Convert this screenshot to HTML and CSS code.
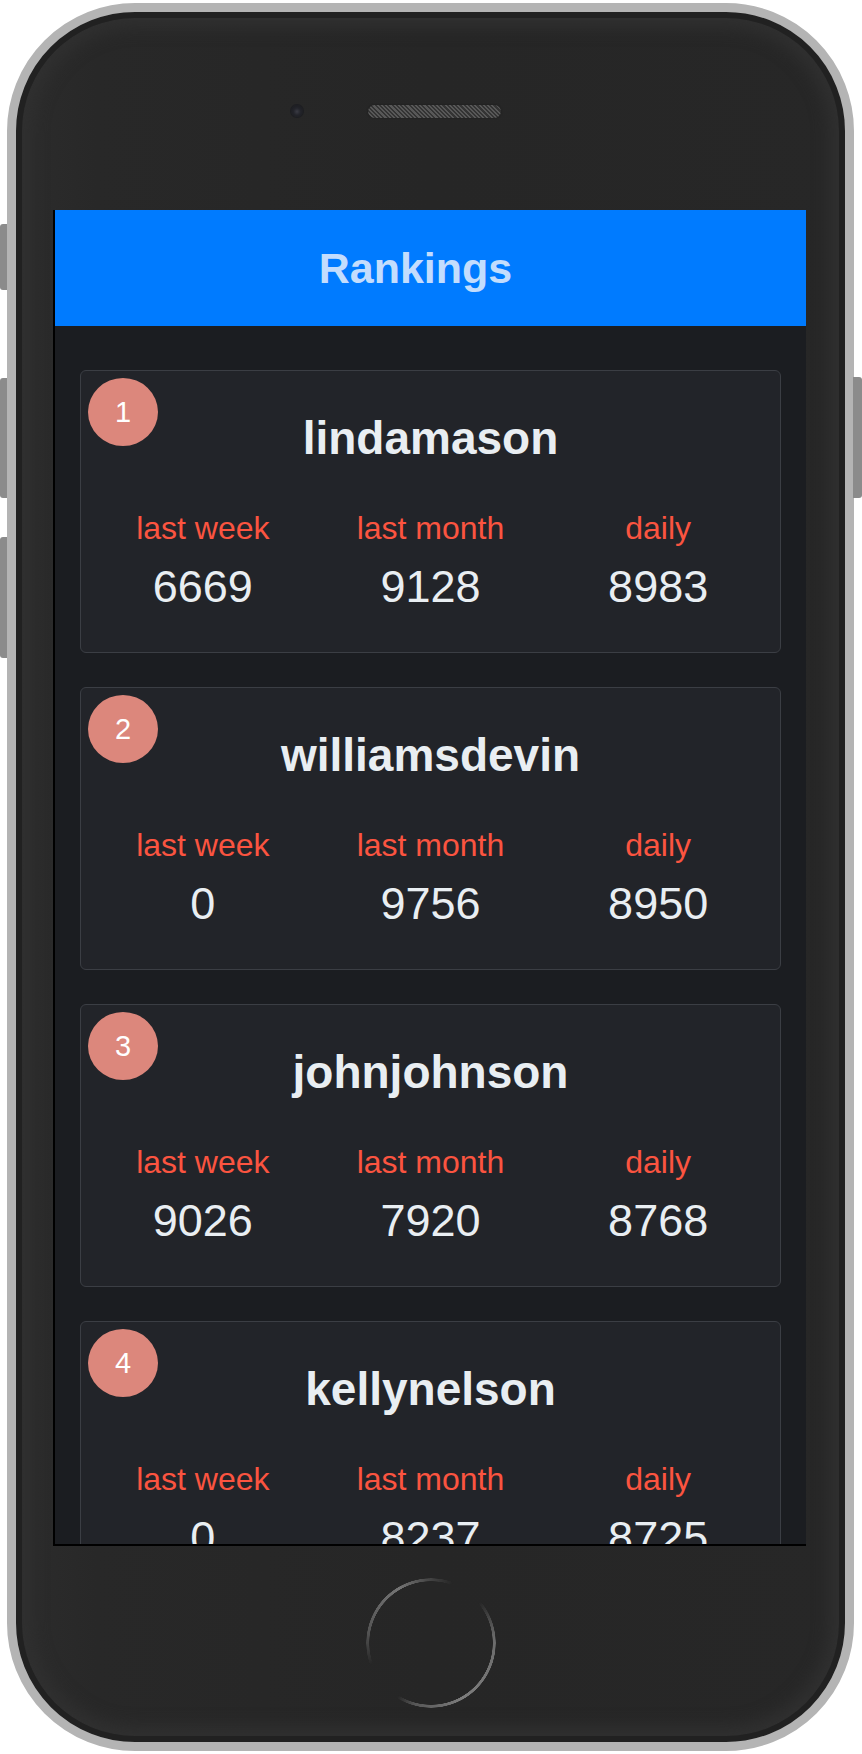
FILE: index.html
```html
<!DOCTYPE html>
<html lang="en">
<head>
<meta charset="utf-8">
<title>Rankings</title>
<link rel="stylesheet" href="styles.css">
</head>
<body>
<div class="phone">
  <span class="btn btn-mute"></span>
  <span class="btn btn-vol-up"></span>
  <span class="btn btn-vol-down"></span>
  <span class="btn btn-power"></span>
  <div class="phone-top">
    <span class="camera"></span>
    <span class="speaker"></span>
  </div>
  <div class="screen">
    <header class="app-header"><h1 class="app-title">Rankings</h1></header>
    <main class="rank-list">
      <section class="card">
        <span class="badge">1</span>
        <h2 class="name">lindamason</h2>
        <div class="stats">
          <div class="stat"><div class="label">last week</div><div class="value">6669</div></div>
          <div class="stat"><div class="label">last month</div><div class="value">9128</div></div>
          <div class="stat"><div class="label">daily</div><div class="value">8983</div></div>
        </div>
      </section>
      <section class="card">
        <span class="badge">2</span>
        <h2 class="name">williamsdevin</h2>
        <div class="stats">
          <div class="stat"><div class="label">last week</div><div class="value">0</div></div>
          <div class="stat"><div class="label">last month</div><div class="value">9756</div></div>
          <div class="stat"><div class="label">daily</div><div class="value">8950</div></div>
        </div>
      </section>
      <section class="card">
        <span class="badge">3</span>
        <h2 class="name">johnjohnson</h2>
        <div class="stats">
          <div class="stat"><div class="label">last week</div><div class="value">9026</div></div>
          <div class="stat"><div class="label">last month</div><div class="value">7920</div></div>
          <div class="stat"><div class="label">daily</div><div class="value">8768</div></div>
        </div>
      </section>
      <section class="card">
        <span class="badge">4</span>
        <h2 class="name">kellynelson</h2>
        <div class="stats">
          <div class="stat"><div class="label">last week</div><div class="value">0</div></div>
          <div class="stat"><div class="label">last month</div><div class="value">8237</div></div>
          <div class="stat"><div class="label">daily</div><div class="value">8725</div></div>
        </div>
      </section>
    </main>
  </div>
  <div class="phone-bottom">
    <span class="home"></span>
  </div>
</div>
</body>
</html>
```

FILE: styles.css
```css
* { box-sizing: border-box; }

html, body {
  margin: 0;
  padding: 0;
  background: #ffffff;
  font-family: "Liberation Sans", Arial, sans-serif;
}

body {
  width: 862px;
  height: 1754px;
  overflow: hidden;
}

.phone {
  position: relative;
  margin: 3px 0 0 7px;
  width: 847px;
  height: 1748px;
  border: 9px solid #b4b4b4;
  border-radius: 128px;
  background: linear-gradient(to right, #2c2c2c 0, #282828 80px, #262626 50%, #272727 100%);
  box-shadow: inset 0 0 0 6px #212121, inset 0 0 16px 16px #303030;
  display: flex;
  flex-direction: column;
}

.btn {
  position: absolute;
  background: #8b8b8b;
  border-radius: 3px 0 0 3px;
}
.btn-mute { left: -16px; top: 212px; width: 7px; height: 66px; }
.btn-vol-up { left: -16px; top: 366px; width: 7px; height: 120px; }
.btn-vol-down { left: -16px; top: 525px; width: 7px; height: 121px; }
.btn-power { left: 837px; top: 365px; width: 9px; height: 121px; border-radius: 0 3px 3px 0; }

.phone-top {
  height: 198px;
  display: flex;
  align-items: center;
  padding-left: 275px;
}

.camera {
  width: 12px;
  height: 12px;
  border-radius: 50%;
  background: radial-gradient(circle at 50% 55%, #3a3b44 0, #23242a 40%, #17181c 100%);
  box-shadow: 0 0 0 1px #1d1e22;
  margin-right: 65px;
}

.speaker {
  width: 133px;
  height: 13px;
  border-radius: 7px;
  background:
    repeating-linear-gradient(45deg, rgba(90,90,90,0.9) 0 1.5px, rgba(50,50,50,0.9) 1.5px 3px),
    #444;
  box-shadow: 0 0 2px #1a1a1a;
}

.screen {
  margin-left: 37px;
  width: 753px;
  height: 1336px;
  border-left: 2px solid #000;
  border-bottom: 2px solid #000;
  background: #1b1d21;
  overflow: hidden;
}

.app-header {
  height: 116px;
  background: #007bff;
  display: flex;
  align-items: center;
  justify-content: center;
  padding-right: 30px;
}

.app-title {
  margin: 0;
  font-size: 43px;
  font-weight: 700;
  color: #c3ddfd;
  line-height: 1;
}

.rank-list {
  padding: 44px 25px 0;
  display: flex;
  flex-direction: column;
  gap: 34px;
}

.card {
  position: relative;
  flex: none;
  background: #222429;
  border: 1px solid #3b3e44;
  border-radius: 6px;
  padding: 41px 8px 40px;
}

.badge {
  position: absolute;
  top: 7px;
  left: 7px;
  width: 70px;
  height: 68px;
  border-radius: 50%;
  background: #dc877c;
  color: #ffffff;
  font-size: 29px;
  line-height: 68px;
  text-align: center;
}

.name {
  margin: 0;
  font-size: 46px;
  line-height: 52px;
  font-weight: 700;
  text-align: center;
  color: #e9eef2;
}

.stats {
  margin-top: 46px;
  display: grid;
  grid-template-columns: repeat(3, 1fr);
}

.stat { text-align: center; }

.label {
  font-size: 32px;
  line-height: 36px;
  color: #fb5440;
}

.value {
  margin-top: 16px;
  font-size: 45px;
  line-height: 50px;
  color: #e9eef2;
}

.phone-bottom {
  flex: 1;
  display: flex;
  align-items: center;
  justify-content: center;
  padding: 0 0 2px 0;
}

.home {
  width: 130px;
  height: 130px;
  border-radius: 50%;
  background: conic-gradient(from 0deg,
    rgba(120,120,120,0.35) 0deg,
    rgba(120,120,120,0) 20deg,
    rgba(120,120,120,0) 50deg,
    rgba(125,125,125,0.8) 85deg,
    rgba(130,130,130,0.95) 150deg,
    rgba(120,120,120,0.6) 195deg,
    rgba(120,120,120,0) 212deg,
    rgba(120,120,120,0) 250deg,
    rgba(115,115,115,0.6) 280deg,
    rgba(125,125,125,0.9) 330deg,
    rgba(120,120,120,0.35) 360deg);
  -webkit-mask: radial-gradient(circle, transparent 61.5px, #000 62px, #000 64.5px, transparent 65px);
  mask: radial-gradient(circle, transparent 61.5px, #000 62px, #000 64.5px, transparent 65px);
}
```
